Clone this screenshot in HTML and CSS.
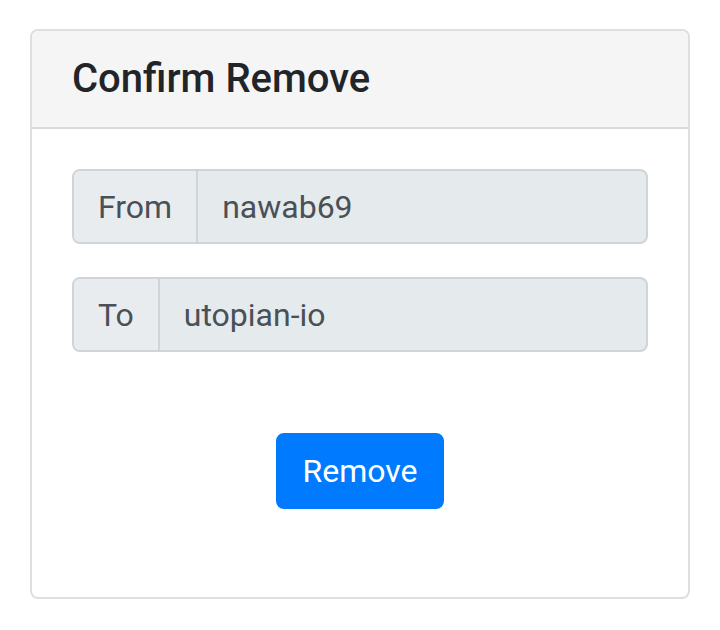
FILE: index.html
```html
<!DOCTYPE html>
<html>
<head>
<meta charset="utf-8">
<link rel="stylesheet" href="styles.css">
</head>
<body>
<div class="page">
  <div class="card">
    <div class="card-header">
      <h5 class="card-title">Confirm Remove</h5>
    </div>
    <div class="card-body">
      <div class="input-group">
        <span class="input-label">From</span>
        <input class="input-field" type="text" value="nawab69" readonly>
      </div>
      <div class="input-group">
        <span class="input-label">To</span>
        <input class="input-field" type="text" value="utopian-io" readonly>
      </div>
      <div class="actions">
        <button class="btn-primary" type="button">Remove</button>
      </div>
    </div>
  </div>
</div>
</body>
</html>
```
FILE: styles.css
```css
* { box-sizing: border-box; }
html, body { margin: 0; padding: 0; background: #fff; }
body {
  font-family: Roboto, "Liberation Sans", sans-serif;
  color: #212529;
}
.page {
  padding: 29px 30px 0 30px;
}
.card {
  width: 660px;
  border: 2px solid #dfdfdf;
  border-radius: 8px;
  overflow: hidden;
  background: #fff;
}
.card-header {
  background: #f5f5f5;
  border-bottom: 2px solid #d9d9d9;
  padding: 24px 40px;
}
.card-title {
  margin: 0;
  font-size: 40px;
  font-weight: 500;
  line-height: 48px;
  color: #212529;
}
.card-body {
  padding: 40px 40px 41px 40px;
}
.input-group {
  display: flex;
  height: 75px;
  border: 2px solid #ced4da;
  border-radius: 8px;
  background: #e5eaed;
  margin-bottom: 33px;
  overflow: hidden;
}
.input-label {
  display: flex;
  align-items: center;
  padding: 0 24px;
  font-size: 32px;
  color: #495057;
  border-right: 2px solid #ced4da;
  background: #e9ecef;
}
.input-field {
  flex: 1;
  min-width: 0;
  border: 0;
  background: transparent;
  padding: 0 24px;
  font-family: inherit;
  font-size: 32px;
  color: #495057;
  outline: none;
}
.actions {
  display: flex;
  justify-content: center;
  padding-top: 48px;
  padding-bottom: 47px;
}
.btn-primary {
  font-family: inherit;
  font-size: 32px;
  line-height: 48px;
  color: #fff;
  background: #007bff;
  border: 2px solid #007bff;
  border-radius: 8px;
  padding: 12px 24px;
}
```
